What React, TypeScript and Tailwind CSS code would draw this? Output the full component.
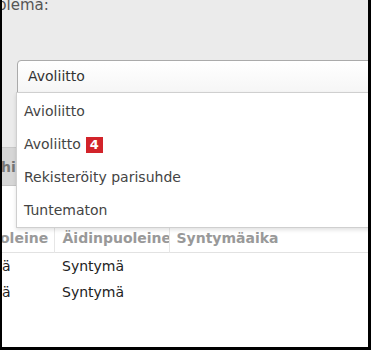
export default function App() {
  const options = ["Avioliitto", "Avoliitto", "Rekisteröity parisuhde", "Tuntematon"];

  return (
    <div className="relative w-[371px] h-[350px] overflow-hidden bg-white border-l-2 border-r-[3px] border-b-[3px] border-black font-['DejaVu_Sans',sans-serif] text-[14px] text-[#333]">
      {/* top form area */}
      <div className="h-[152px] bg-[#ebebeb] border-b border-[#c8c8c8]">
        <div className="-mt-[4px] -ml-[5px] text-[15px] leading-[18px] text-[#555]">plema:</div>
      </div>

      {/* section bar */}
      <div className="h-[38px] bg-[#d6d6d6] border-b border-[#c4c4c4] flex items-center pt-[2px] font-bold text-[#777]">
        <span className="-ml-[1px]">hi</span>
      </div>

      {/* table */}
      <table className="mt-[40px] -ml-[2px] w-[calc(100%+2px)] border-collapse text-left">
        <thead>
          <tr className="h-[26px] border-b border-[#e2e2e2] text-[#999]">
            <th className="p-0 w-[54px] border-r border-[#e6e6e6] font-bold">
              <div className="w-[53px] overflow-hidden whitespace-nowrap">oleine</div>
            </th>
            <th className="p-0 w-[115px] border-r border-[#e6e6e6] font-bold">
              <div className="w-[114px] pl-[8px] overflow-hidden whitespace-nowrap">Äidinpuoleinen</div>
            </th>
            <th className="pl-[7px] font-bold">Syntymäaika</th>
          </tr>
        </thead>
        <tbody className="text-[#222]">
          {[0, 1].map((i) => (
            <tr key={i} className="h-[26px]">
              <td className="pl-[2px] pt-[3px]">ä</td>
              <td className="pl-[8px] pt-[3px]">Syntymä</td>
              <td></td>
            </tr>
          ))}
        </tbody>
      </table>

      {/* open select */}
      <div className="absolute left-[15px] top-[60px] w-[380px]">
        <div className="h-[33px] flex items-center pl-[10px] border border-[#aaa] rounded-tl-[4px] bg-gradient-to-b from-white to-[#f6f6f6] text-[#333]">
          Avoliitto
        </div>
        <div className="-mt-px -ml-px pt-[2px] bg-white border border-[#cfcfcf] shadow-[0_2px_4px_rgba(0,0,0,0.12)] text-[#444]">
          {options.map((o, i) => (
            <div key={o} className="h-[33px] flex items-center pl-[7px]">
              {o}
              {i === 1 && (
                <span className="ml-[5px] inline-flex items-center justify-center w-[17px] h-[16px] bg-[#d2232a] text-white font-bold text-[13px] leading-none">
                  4
                </span>
              )}
            </div>
          ))}
        </div>
      </div>
    </div>
  );
}
